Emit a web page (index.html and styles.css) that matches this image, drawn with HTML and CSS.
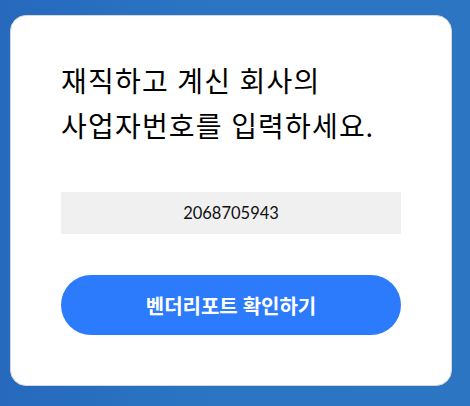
FILE: index.html
```html
<!DOCTYPE html>
<html lang="ko">
<head>
    <meta charset="UTF-8">
    <meta name="viewport" content="width=device-width, initial-scale=1.0">
    <title>벤더리포트 확인</title>
    <link rel="stylesheet" href="styles.css">
</head>
<body>
    <div class="card">
        <h2 class="title">재직하고 계신 회사의<br>사업자번호를 입력하세요.</h2>
        <div class="biz-number">2068705943</div>
        <button type="button" class="check-btn">벤더리포트 확인하기</button>
    </div>
</body>
</html>
```

FILE: styles.css
```css
* {
    margin: 0;
    padding: 0;
    box-sizing: border-box;
    font-family: Lato, "Noto Sans CJK KR", sans-serif;
}

body {
    width: 470px;
    height: 406px;
    background: linear-gradient(to right, #2669bd, #2a74c2 40%, #2b75c3);
    padding: 15px 18px 20px 10px;
}

.card {
    width: 442px;
    height: 371px;
    background: #fff;
    border: 1px solid #d6d6d6;
    border-radius: 16px;
    padding: 43px 50px 0 50px;
}

.title {
    font-size: 28px;
    font-weight: 400;
    line-height: 45px;
    letter-spacing: 1.2px;
    color: #000;
    margin-bottom: 43px;
}

.biz-number {
    height: 42px;
    background: #f0f0f0;
    display: flex;
    justify-content: center;
    align-items: center;
    font-size: 16.5px;
    color: #111;
    margin-bottom: 41px;
}

.check-btn {
    width: 100%;
    height: 60px;
    border: none;
    border-radius: 30px;
    background: #2d7bfd;
    color: #fff;
    font-size: 20px;
    font-weight: 700;
    cursor: pointer;
}
```
